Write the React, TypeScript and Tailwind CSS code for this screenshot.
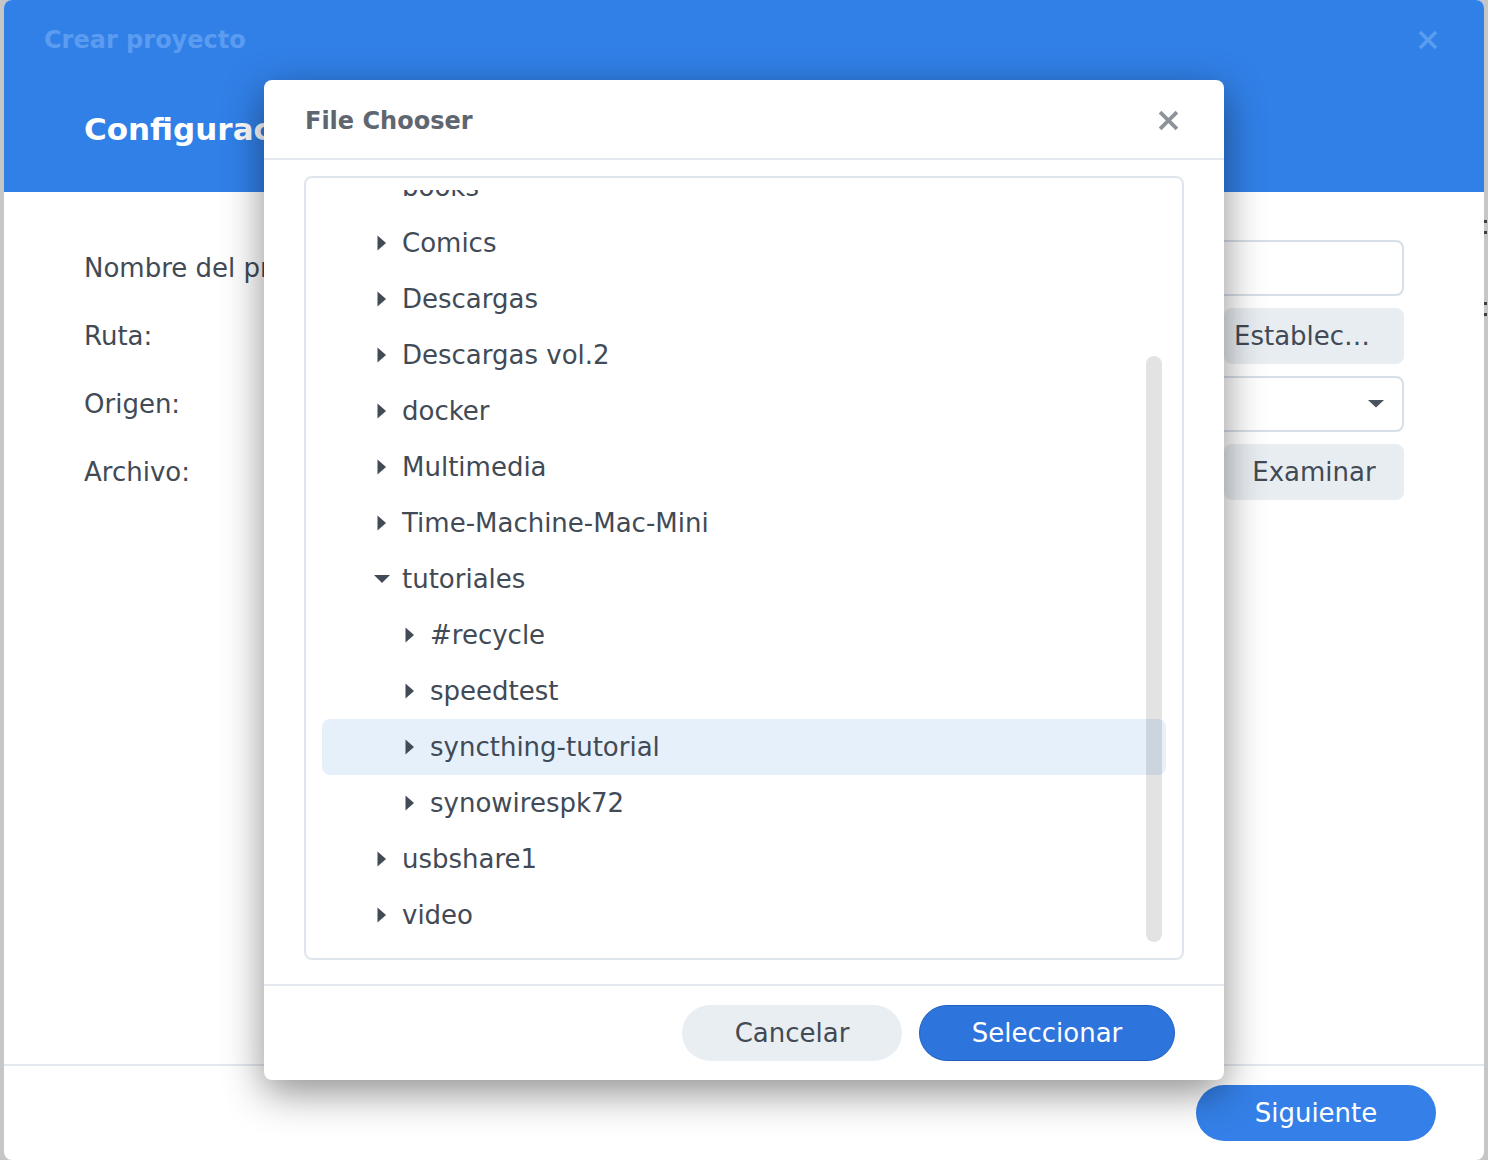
import React from 'react';

type Row = { name: string; level: 1 | 2; caret: 'none' | 'right' | 'down'; selected?: boolean };

const rows: Row[] = [
  { name: 'books', level: 1, caret: 'none' },
  { name: 'Comics', level: 1, caret: 'right' },
  { name: 'Descargas', level: 1, caret: 'right' },
  { name: 'Descargas vol.2', level: 1, caret: 'right' },
  { name: 'docker', level: 1, caret: 'right' },
  { name: 'Multimedia', level: 1, caret: 'right' },
  { name: 'Time-Machine-Mac-Mini', level: 1, caret: 'right' },
  { name: 'tutoriales', level: 1, caret: 'down' },
  { name: '#recycle', level: 2, caret: 'right' },
  { name: 'speedtest', level: 2, caret: 'right' },
  { name: 'syncthing-tutorial', level: 2, caret: 'right', selected: true },
  { name: 'synowirespk72', level: 2, caret: 'right' },
  { name: 'usbshare1', level: 1, caret: 'right' },
  { name: 'video', level: 1, caret: 'right' },
];

const CloseIcon = ({ color, size }: { color: string; size: number }) => (
  <svg width={size} height={size} viewBox="0 0 20 20" fill="none" stroke={color} strokeWidth="3.6" strokeLinecap="butt">
    <line x1="2" y1="2" x2="18" y2="18" />
    <line x1="18" y1="2" x2="2" y2="18" />
  </svg>
);

const Caret = ({ kind }: { kind: Row['caret'] }) => (
  <svg width="16" height="16" viewBox="0 0 16 16" fill="#414a55" className="shrink-0">
    {kind === 'right' && <path d="M3.5 0.5 L12 8 L3.5 15.5 Z" />}
    {kind === 'down' && <path d="M0 4 L16 4 L8 12 Z" />}
  </svg>
);

const FormRow = ({ label, children }: { label: string; children: React.ReactNode }) => (
  <div className="h-[56px] flex items-center">
    <div className="w-[400px] shrink-0 text-[26px] text-[#414a55] whitespace-nowrap">{label}</div>
    <div className="flex-1 h-full flex justify-end">{children}</div>
  </div>
);

export default function App() {
  return (
    <div className="w-[1488px] h-[1160px] bg-[#c6c6c6] flex overflow-hidden relative font-['DejaVu_Sans','Verdana',sans-serif]">
      <div className="w-[4px] shrink-0" />

      {/* Outer dialog: Crear proyecto */}
      <div className="w-[1480px] h-full bg-white rounded-[8px] flex flex-col overflow-hidden shrink-0">
        <div className="h-[192px] bg-[#3180e8] flex flex-col shrink-0">
          <div className="h-[80px] flex items-center justify-between pl-[40px] pr-[46px]">
            <span className="text-[24px] font-bold text-[#5b9cf0]">Crear proyecto</span>
            <CloseIcon color="#5b9cf0" size={20} />
          </div>
          <div className="h-[98px] flex items-center pl-[80px]">
            <span className="text-[31px] font-bold text-white whitespace-nowrap">Configuración del proyecto</span>
          </div>
        </div>

        <div className="flex-1 px-[80px] pt-[48px] flex flex-col gap-[12px]">
          <FormRow label="Nombre del proyecto:">
            <div className="w-full h-full border-2 border-[#d6dee7] rounded-[8px] bg-white" />
          </FormRow>
          <FormRow label="Ruta:">
            <div className="w-[180px] h-full rounded-[8px] bg-[#e8edf2] flex items-center pl-[10px] text-[26px] text-[#414a55] whitespace-nowrap">
              Establec…
            </div>
          </FormRow>
          <FormRow label="Origen:">
            <div className="w-full h-full border-2 border-[#d6dee7] rounded-[8px] bg-white flex items-center justify-end pr-[18px]">
              <svg width="16" height="8" viewBox="0 0 16 8" fill="#4a525c">
                <path d="M0 0 L16 0 L8 7.5 Z" />
              </svg>
            </div>
          </FormRow>
          <FormRow label="Archivo:">
            <div className="w-[180px] h-full rounded-[8px] bg-[#e8edf2] flex items-center justify-center text-[26px] text-[#414a55]">
              Examinar
            </div>
          </FormRow>
        </div>

        <div className="h-[96px] border-t-2 border-[#e3e8ef] flex items-center justify-end pr-[48px] shrink-0">
          <button className="w-[240px] h-[56px] rounded-full bg-[#3480e8] text-white text-[26px]">Siguiente</button>
        </div>
      </div>

      <div className="w-[4px] shrink-0 flex flex-col pt-[220px]">
        <div className="h-[3px] w-[3px] bg-[#3a3f45]" />
        <div className="h-[3px] w-[3px] bg-[#3a3f45] mt-[8px]" />
        <div className="h-[3px] w-[3px] bg-[#3a3f45] mt-[68px]" />
        <div className="h-[3px] w-[3px] bg-[#3a3f45] mt-[8px]" />
      </div>

      {/* File Chooser modal */}
      <div className="absolute left-[264px] top-[80px] w-[960px] h-[1000px] bg-white rounded-[8px] flex flex-col shadow-[0_12px_40px_rgba(0,0,0,0.45)]">
        <div className="h-[80px] border-b-2 border-[#e3e8ef] flex items-center justify-between pl-[41px] pr-[45px] pt-[3px] shrink-0">
          <span className="text-[24px] font-bold text-[#5f6670]">File Chooser</span>
          <CloseIcon color="#8e9399" size={21} />
        </div>

        <div className="flex-1 px-[40px] pt-[16px] pb-[24px] min-h-0">
          <div className="h-full border-2 border-[#dfe5ec] rounded-[8px] py-[12px] relative">
            <div className="h-full overflow-hidden">
              <div className="-mt-[31px] px-[16px]">
                {rows.map((r) => (
                  <div
                    key={r.name}
                    className={`h-[56px] flex items-center gap-[12px] rounded-[8px] ${r.level === 1 ? 'pl-[52px]' : 'pl-[80px]'} ${r.selected ? 'bg-[#e6f0fb]' : ''}`}
                  >
                    <Caret kind={r.caret} />
                    <span className="text-[26px] text-[#414a55] whitespace-nowrap">{r.name}</span>
                  </div>
                ))}
              </div>
            </div>
            <div className="absolute right-[20px] top-[178px] w-[16px] h-[586px] rounded-full bg-black/[0.11]" />
          </div>
        </div>

        <div className="h-[96px] border-t-2 border-[#e3e8ef] flex items-center justify-end gap-[17px] pr-[49px] shrink-0">
          <button className="w-[220px] h-[56px] rounded-full bg-[#e9eef3] text-[26px] text-[#414a55]">Cancelar</button>
          <button className="w-[256px] h-[56px] rounded-full bg-[#2d74dc] border border-[#1f5fbf] text-[26px] text-white">Seleccionar</button>
        </div>
      </div>
    </div>
  );
}
